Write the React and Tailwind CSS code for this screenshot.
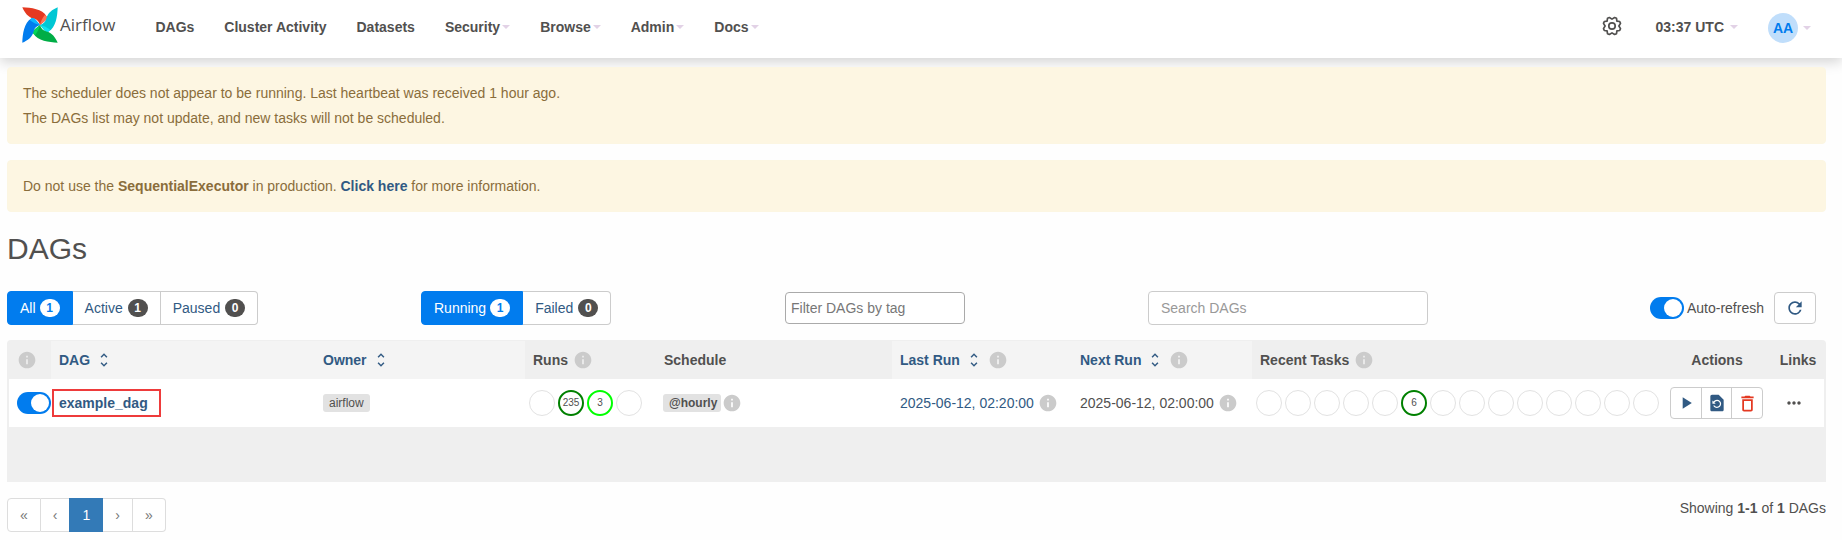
import React from "react";
import {
  MdInfo,
  MdUnfoldMore,
  MdPlayArrow,
  MdRestorePage,
  MdDeleteOutline,
  MdMoreHoriz,
  MdRefresh,
} from "react-icons/md";

const blades = [
  { angle: 0, main: "#e43921", light: "#ff7557" },
  { angle: 90, main: "#00c7d4", light: "#11e1ee" },
  { angle: 180, main: "#00ad46", light: "#04d659" },
  { angle: 270, main: "#017cee", light: "#0cb6ff" },
];

function Pinwheel() {
  return (
    <svg viewBox="0 0 36 36" className="size-9" aria-hidden="true">
      {blades.map((blade) => (
        <g key={blade.angle} transform={`rotate(${blade.angle} 18 18)`}>
          <path d="M0.3 0.3 C9 0.6 20.5 2 24.6 9.4 C25.4 10.9 24.8 12.2 23.4 13.4 L18 18 C17 14.6 15 12.4 11.6 11.6 C6 10.4 2.6 5.6 0.3 0.3Z" fill={blade.main} />
          <path d="M18 18 C18.8 14.4 20.6 10.6 22.8 8 C23.6 8.4 24.2 8.8 24.7 9.6 C25.4 10.9 24.8 12.2 23.4 13.4Z" fill={blade.light} />
        </g>
      ))}
    </svg>
  );
}

function Gear() {
  return (
    <svg viewBox="0 0 20 20" className="size-5" fill="none" stroke="#51504f" strokeWidth="1.7" strokeLinejoin="round" aria-hidden="true">
      <path d="M10 3.1 L12.6 1.5 L14.5 2.3 L14.9 5.1 L17.7 5.5 L18.5 7.4 L16.9 10 L18.5 12.6 L17.7 14.5 L14.9 14.9 L14.5 17.7 L12.6 18.5 L10 16.9 L7.4 18.5 L5.5 17.7 L5.1 14.9 L2.3 14.5 L1.5 12.6 L3.1 10 L1.5 7.4 L2.3 5.5 L5.1 5.1 L5.5 2.3 L7.4 1.5Z" />
      <circle cx="10" cy="10" r="3.2" />
    </svg>
  );
}

function Caret() {
  return (
    <svg viewBox="0 0 8 4" className="h-1 w-2 shrink-0" fill="#e2d2e6" aria-hidden="true">
      <path d="M0 0H8L4 4Z" />
    </svg>
  );
}

const navItems = [
  { label: "DAGs" },
  { label: "Cluster Activity" },
  { label: "Datasets" },
  { label: "Security", menu: true },
  { label: "Browse", menu: true },
  { label: "Admin", menu: true },
  { label: "Docs", menu: true },
];

function Header() {
  return (
    <header className="flex h-[58px] items-start bg-white pl-[22px] pr-[31px] font-bold shadow-[0_4px_12px_rgba(0,0,0,0.17)]">
      <a href="#home" className="flex items-center gap-0.5 pt-[7px]">
        <Pinwheel />
        <span className="font-['Open_Sans',sans-serif] text-[17px] font-normal">Airflow</span>
      </a>
      <nav className="flex flex-1 gap-[30px] pl-10 pt-[17px]">
        {navItems.map((item) =>
          item.menu ? (
            <button key={item.label} type="button" className="flex items-center gap-0.5 font-bold">
              {item.label}
              <Caret />
            </button>
          ) : (
            <a key={item.label} href="#nav">
              {item.label}
            </a>
          )
        )}
      </nav>
      <button type="button" aria-label="Settings" className="mr-[34px] pt-4">
        <Gear />
      </button>
      <button type="button" className="mr-[30px] flex items-center gap-1.5 pt-[17px] font-bold">
        03:37 UTC
        <Caret />
      </button>
      <button type="button" className="flex items-center gap-[5px] pt-[13px] font-bold">
        <span className="flex size-[30px] items-center justify-center rounded-full bg-[#c0defb] text-sm text-[#017cee]">AA</span>
        <Caret />
      </button>
    </header>
  );
}

function Alert({ children }) {
  return (
    <div className="flex flex-col gap-[5px] rounded border border-[#fcf6e2] bg-[#fdf6e2] p-[15px] text-[#8a6d3b]">{children}</div>
  );
}

function FilterGroup({ items }) {
  return (
    <div className="flex">
      {items.map((item) => (
        <button
          key={item.label}
          type="button"
          className={
            item.active
              ? "flex h-[34px] items-center gap-1 rounded-l border border-[#017cee] bg-[#017cee] px-3 text-white"
              : "flex h-[34px] items-center gap-[5px] border-y border-r border-[#ccc] bg-white px-3 text-[#315a83] last:rounded-r"
          }
        >
          {item.label}
          <span
            className={
              item.active
                ? "flex h-[18px] w-5 items-center justify-center rounded-full bg-white text-xs font-bold text-[#017cee]"
                : "flex h-[18px] w-5 items-center justify-center rounded-full bg-[#51504f] text-xs font-bold text-white"
            }
          >
            {item.count}
          </span>
        </button>
      ))}
    </div>
  );
}

function Toggle({ label, children }) {
  return (
    <label className="flex items-center gap-[3px]">
      <input type="checkbox" role="switch" defaultChecked aria-label={label} className="peer sr-only" />
      <span className="flex h-[22px] w-[34px] shrink-0 justify-start rounded-full bg-[#ccc] p-0.5 peer-checked:justify-end peer-checked:bg-[#017cee]">
        <span className="size-[18px] rounded-full bg-white" />
      </span>
      {children}
    </label>
  );
}

function Toolbar() {
  return (
    <div className="grid grid-cols-[414fr_364fr_363fr_280fr_398fr] items-center">
      <FilterGroup
        items={[
          { label: "All", count: 1, active: true },
          { label: "Active", count: 1 },
          { label: "Paused", count: 0 },
        ]}
      />
      <FilterGroup
        items={[
          { label: "Running", count: 1, active: true },
          { label: "Failed", count: 0 },
        ]}
      />
      <input
        aria-label="Filter DAGs by tag"
        placeholder="Filter DAGs by tag"
        className="h-8 w-[180px] rounded border border-[#aaa] bg-white px-[5px] placeholder:text-[#777]"
      />
      <input
        aria-label="Search DAGs"
        placeholder="Search DAGs"
        className="h-[34px] w-full rounded border border-[#ccc] bg-white px-3 placeholder:text-[#999]"
      />
      <div className="flex items-center justify-end gap-2.5 pr-2.5">
        <Toggle>Auto-refresh</Toggle>
        <button type="button" aria-label="Refresh" className="flex h-8 w-[42px] items-center justify-center rounded border border-[#ccc] bg-white text-[#315a83]">
          <MdRefresh size={20} />
        </button>
      </div>
    </div>
  );
}

function Info() {
  return <MdInfo size={20} className="shrink-0 text-[#cbcbcb]" aria-hidden="true" />;
}

function SortHead({ children, info }) {
  return (
    <th scope="col" className="bg-[#f4f4f4] px-2 text-left">
      <div className="flex items-center gap-[5px]">
        <a href="#sort" className="flex items-center gap-[5px] text-[#315a83]">
          {children}
          <MdUnfoldMore size={18} />
        </a>
        {info && <Info />}
      </div>
    </th>
  );
}

const ringStyles = {
  none: "border border-[#e2e2e2]",
  success: "border-2 border-[#008000]",
  running: "border-2 border-[#00ff00]",
};

function Rings({ items }) {
  return (
    <div className="flex gap-[3px] pl-1">
      {items.map((item, i) => (
        <span key={i} className={`flex size-[26px] shrink-0 items-center justify-center rounded-full text-[10px] ${ringStyles[item.state]}`}>
          {item.count}
        </span>
      ))}
    </div>
  );
}

const none = { state: "none" };
const runs = [none, { state: "success", count: 235 }, { state: "running", count: 3 }, none];
const tasks = Array.from({ length: 14 }, (_, i) => (i === 5 ? { state: "success", count: 6 } : none));

function DagTable() {
  return (
    <div className="rounded-t border-x-2 border-t border-[#efefef] bg-[#efefef] pb-[55px]">
      <table className="w-full table-fixed border-collapse">
        <colgroup>
          <col className="w-[42px]" />
          <col />
          <col className="w-[210px]" />
          <col className="w-[131px]" />
          <col className="w-[236px]" />
          <col className="w-[180px]" />
          <col className="w-[180px]" />
          <col className="w-[410px]" />
          <col className="w-[110px]" />
          <col className="w-[52px]" />
        </colgroup>
        <thead>
          <tr className="h-[38px]">
            <th scope="col" aria-label="Paused" className="pl-2">
              <Info />
            </th>
            <SortHead>DAG</SortHead>
            <SortHead>Owner</SortHead>
            <th scope="col" className="px-2 text-left">
              <div className="flex items-center gap-[5px]">
                Runs <Info />
              </div>
            </th>
            <th scope="col" className="px-2 text-left">Schedule</th>
            <SortHead info>Last Run</SortHead>
            <SortHead info>Next Run</SortHead>
            <th scope="col" className="px-2 text-left">
              <div className="flex items-center gap-[5px]">
                Recent Tasks <Info />
              </div>
            </th>
            <th scope="col">Actions</th>
            <th scope="col">Links</th>
          </tr>
        </thead>
        <tbody>
          <tr className="h-12 bg-white">
            <td className="pl-2">
              <Toggle label="Pause or unpause example_dag" />
            </td>
            <td>
              <a href="#dag" className="ml-px inline-block border-2 border-[#ee3b3b] py-0.5 pl-[5px] pr-[11px] font-bold text-[#315a83]">
                example_dag
              </a>
            </td>
            <td className="px-2">
              <a href="#owner" className="flex h-[18px] w-fit items-center rounded-[3px] bg-[#e2e2e2] px-1.5 text-xs">airflow</a>
            </td>
            <td>
              <Rings items={runs} />
            </td>
            <td className="px-[7px]">
              <div className="flex items-center gap-px">
                <a href="#schedule" className="flex h-[18px] w-[58px] items-center rounded-[3px] bg-[#e2e2e2] px-1.5 text-xs font-bold">@hourly</a>
                <Info />
              </div>
            </td>
            <td className="px-2">
              <div className="flex items-center gap-1">
                <a href="#last" className="text-[#315a83]">2025-06-12, 02:20:00</a>
                <Info />
              </div>
            </td>
            <td className="px-2">
              <div className="flex items-center gap-1">
                <time>2025-06-12, 02:00:00</time>
                <Info />
              </div>
            </td>
            <td>
              <Rings items={tasks} />
            </td>
            <td className="pl-2">
              <div className="flex h-8 w-[93px] divide-x divide-[#ccc] rounded border border-[#ccc] text-[#315a83]">
                <button type="button" aria-label="Trigger DAG" className="flex flex-1 items-center justify-center">
                  <MdPlayArrow size={20} />
                </button>
                <button type="button" aria-label="Reparse DAG" className="flex flex-1 items-center justify-center">
                  <MdRestorePage size={20} />
                </button>
                <button type="button" aria-label="Delete DAG" className="flex flex-1 items-center justify-center text-[#e43921]">
                  <MdDeleteOutline size={21} />
                </button>
              </div>
            </td>
            <td className="pl-3">
              <button type="button" aria-label="Links" className="block">
                <MdMoreHoriz size={20} />
              </button>
            </td>
          </tr>
        </tbody>
      </table>
    </div>
  );
}

const pages = ["«", "‹", "1", "›", "»"];

function Pagination() {
  return (
    <nav aria-label="Pages" className="flex">
      {pages.map((page) => (
        <a
          key={page}
          href="#page"
          className={
            page === "1"
              ? "border border-[#337ab7] bg-[#337ab7] px-3 py-1.5 text-white"
              : "border-y border-r border-[#ddd] bg-white px-3 py-1.5 text-[#777] first:rounded-l first:border-l last:rounded-r nth-2:border-r-0"
          }
        >
          {page}
        </a>
      ))}
    </nav>
  );
}

export default function App() {
  return (
    <div className="min-h-screen bg-[#fefefe] font-['Liberation_Sans',Arial,sans-serif] text-sm leading-5 text-[#51504f]">
      <Header />
      <main className="pb-2 pl-[7px] pr-4 pt-[9px]">
        <div className="flex flex-col gap-4">
          <Alert>
            <p>The scheduler does not appear to be running. Last heartbeat was received 1 hour ago.</p>
            <p>The DAGs list may not update, and new tasks will not be scheduled.</p>
          </Alert>
          <Alert>
            <p>
              Do not use the <strong>SequentialExecutor</strong> in production.{" "}
              <a href="#docs" className="font-bold text-[#315a83]">Click here</a> for more information.
            </p>
          </Alert>
        </div>
        <h2 className="pb-[26px] pt-5 text-3xl leading-[33px]">DAGs</h2>
        <Toolbar />
        <div className="pb-4 pt-[15px]">
          <DagTable />
        </div>
        <div className="flex items-start justify-between">
          <Pagination />
          <p>
            Showing <strong>1-1</strong> of <strong>1</strong> DAGs
          </p>
        </div>
      </main>
    </div>
  );
}
